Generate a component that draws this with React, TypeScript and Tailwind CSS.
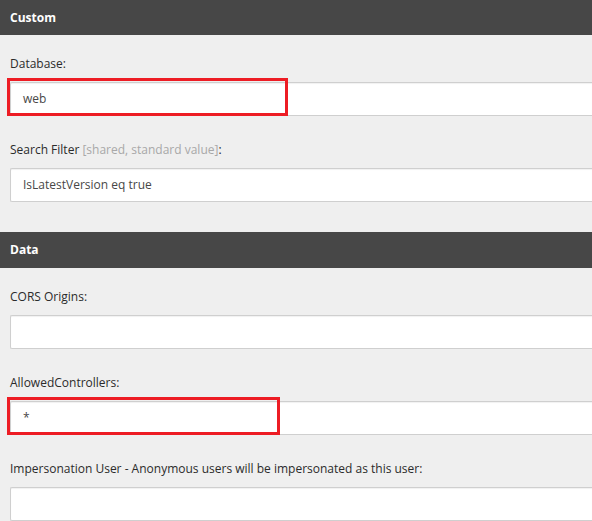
type FieldProps = {
  label: string;
  hint?: string;
  value?: string;
  marked?: string;
};

function Field({ label, hint, value, marked }: FieldProps) {
  return (
    <div className="flex flex-col">
      <label className="h-[18px] pl-[10px] text-[12px] leading-[18px] text-[#2b2b2b]">
        {label}
        {hint && <span className="text-[#a8a8a8]"> {hint}</span>}:
      </label>
      <div className="relative mt-[9px] ml-[10px]">
        <div className="h-[34px] rounded-l-[2px] border border-r-0 border-[#cfcfcf] bg-white pl-[12px] text-[12px] leading-[32px] text-[#474747] shadow-[inset_0_1px_1px_rgba(0,0,0,0.06)]">
          {value}
        </div>
        {marked && (
          <div
            className={`absolute left-[-3px] top-[-4px] bottom-[0px] border-[3px] border-[#ed1c24] ${marked}`}
          />
        )}
      </div>
    </div>
  );
}

function Section({ title, tall, children }: { title: string; tall?: boolean; children: React.ReactNode }) {
  return (
    <section>
      <h2
        className={`flex items-center bg-[#474747] pl-[10px] text-[12px] font-bold text-white ${
          tall ? "h-[36px]" : "h-[35px]"
        }`}
      >
        {title}
      </h2>
      <div className="flex flex-col gap-[25px] pt-[20px] pb-[30px]">{children}</div>
    </section>
  );
}

export default function App() {
  return (
    <div
      className="h-[521px] w-full overflow-hidden bg-[#efefef]"
      style={{ fontFamily: '"Open Sans", "Noto Sans", sans-serif' }}
    >
      <Section title="Custom">
        <Field label="Database" value="web" marked="w-[281px]" />
        <Field label="Search Filter" hint="[shared, standard value]" value="IsLatestVersion eq true" />
      </Section>
      <Section title="Data" tall>
        <Field label="CORS Origins" />
        <Field label="AllowedControllers" value="*" marked="w-[273px]" />
        <Field label="Impersonation User - Anonymous users will be impersonated as this user" />
      </Section>
    </div>
  );
}
